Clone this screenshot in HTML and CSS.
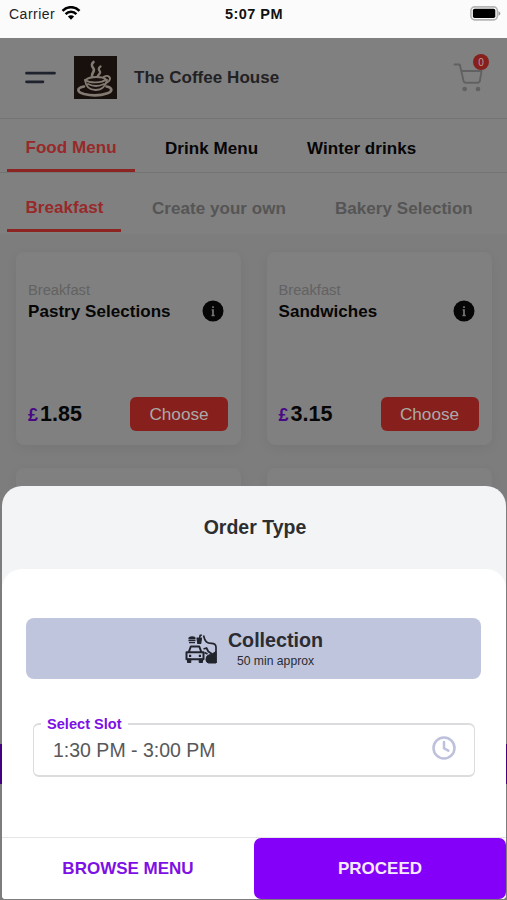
FILE: index.html
```html
<!DOCTYPE html>
<html lang="en">
<head>
<meta charset="utf-8">
<title>The Coffee House</title>
<link rel="stylesheet" href="styles.css">
</head>
<body>
<div class="phone">
  <div class="status">
    <span class="carrier">Carrier
      <svg class="wifi" width="20" height="14" viewBox="0 0 20 14" fill="none" stroke="#000" stroke-width="2.5"><path d="M1.5 4.9C6.2-.1 13.8-.1 18.500 4.900M4.600 8.100c3-3.200 7.800-3.200 10.800 0"/><path d="M10 13.700 6.900 10.500c1.700-1.700 4.500-1.700 6.200 0z" fill="#000" stroke="none"/></svg>
    </span>
    <span class="clock">5:07 PM</span>
    <svg class="battery" width="31" height="15" viewBox="0 0 31 15"><rect x=".9" y=".9" width="26.500" height="13" rx="3.800" fill="#fafafa" stroke="#b5b5b5" stroke-width="1.600"/><rect x="2.900" y="2.700" width="22.400" height="9.400" rx="1.800"/><path d="M28.500 5.200c2.400.8 2.400 3.700 0 4.500z" fill="#999"/></svg>
  </div>
  <header class="bar">
    <svg class="burger" width="31" height="14" viewBox="0 0 31 14" stroke="#1e222d" stroke-width="2.700" stroke-linecap="round"><path d="M1.500 2.200h28M1.500 10.800h16.500"/></svg>
    <svg class="logo" width="43" height="43" viewBox="0 0 43 43" fill="none" stroke="#837a72" stroke-linecap="round">
      <rect width="43" height="43" fill="#17100d" stroke="none"/>
      <path d="M19.500 6c-3 2.500-1.500 4.500 0 6.500 2 3-2.500 4.500-1.500 8" stroke-width="2.600"/><path d="M26.500 10.500c-3 2-1.500 3.500-.5 5s-1.500 3-2.500 5" stroke-width="2.200"/>
      <path d="M11.500 24c3-2.500 7-3 11-3 5 0 8.500 1.200 9.500 2.500-4 3.500-16 4-20.500.5z" stroke-width="1.900"/>
      <path d="M11 24c.7 5.500 4 10 10.500 10s10.500-4.500 11.500-10M14 28c5 2.500 11 2.500 16 0" stroke-width="1.900"/>
      <path d="M29.500 21c5-3 8 1 5.500 4-1 1.200-2 1.600-3 1.700" stroke-width="1.900"/>
      <path d="M10 30.500c-8 1.500-7 5.500 0 7.500 7 1.700 17 1.500 23.500-.8 5.500-2 5-5.700-1-6.700" stroke-width="2.700"/>
    </svg>
    <h1>The Coffee House</h1>
    <div class="cart">
      <svg width="31" height="30" viewBox="0 0 31 30" fill="none" stroke="#616161" stroke-width="1.900" stroke-linecap="round" stroke-linejoin="round"><path d="M1.500 1.500h5.300l3.700 16.300c.3 1.300 1 2 2.400 2h11.500c1.300 0 2.200-.7 2.500-2l1.600-9.800H8.500"/><circle cx="11.700" cy="26" r="1.400" fill="#616161"/><circle cx="25" cy="26" r="1.400" fill="#616161"/></svg>
      <span class="count">0</span>
    </div>
  </header>
  <nav class="tabs main-tabs">
    <a class="tab active">Food Menu</a><a class="tab">Drink Menu</a><a class="tab">Winter drinks</a>
  </nav>
  <nav class="tabs sub-tabs">
    <a class="tab active">Breakfast</a><a class="tab">Create your own</a><a class="tab">Bakery Selection</a>
  </nav>
  <main class="grid">
    <article class="card">
      <div class="kind">Breakfast</div>
      <div class="name"><span>Pastry Selections</span><svg width="22" height="22" viewBox="0 0 22 22"><circle cx="11" cy="11" r="10.500" fill="#060606"/><path d="M11 6.200v1.900M9.700 10H11v5.500M9.500 15.500h3.200" stroke="#777" stroke-width="1.700" fill="none"/></svg></div>
      <div class="buy"><span class="price"><i>£</i>1.85</span><button>Choose</button></div>
    </article>
    <article class="card">
      <div class="kind">Breakfast</div>
      <div class="name"><span>Sandwiches</span><svg width="22" height="22" viewBox="0 0 22 22"><circle cx="11" cy="11" r="10.500" fill="#060606"/><path d="M11 6.200v1.900M9.700 10H11v5.500M9.500 15.500h3.200" stroke="#777" stroke-width="1.700" fill="none"/></svg></div>
      <div class="buy"><span class="price"><i>£</i>3.15</span><button>Choose</button></div>
    </article>
    <article class="card"></article>
    <article class="card"></article>
  </main>
  <div class="basket"></div>
  <section class="sheet">
    <h2>Order Type</h2>
    <div class="panel">
      <div class="method">
        <svg width="32" height="30" viewBox="0 0 32 30" fill="none" stroke="#22242c" stroke-width="2" stroke-linejoin="round">
          <path d="M4 4.500c0-2 6-2 6 0zM3.500 6.500h7M4 8.600h6" stroke-width="1.300"/>
          <path d="M12 4h4.500l-.8 5.500h-2.900zM14.500 4l.5-3h2" fill="#22242c" stroke-width="1.200"/>
          <path d="m3.800 18 2-5.500h8.500l2 5.500M1.500 18.300h17v7h-17z"/><path d="M2.500 25h3.300v3.500H2.500zM14.200 25h3.300v3.500h-3.300z" fill="#22242c" stroke-width="1"/>
          <path d="M4 21.800h2.200M13.800 21.800H16" stroke-width="2.200"/>
          <path d="M18.500 1.500c1.500 6.500 3.500 7.800 8 7.800 3 0 4.500 1 4.500 4V29" stroke-width="1.700"/>
          <path d="m18.500 15 3-1 1.800 3.500L27 20M19.500 18.500l3 1.500" stroke-width="1.800"/>
          <path d="M21.500 23c1-2.500 3.500-2 5.500-3l4-2.500V29h-7.500c-2.500-.5-3-3-2-6z" fill="#22242c" stroke-width="1"/>
        </svg>
        <div class="what"><b>Collection</b><small>50 min approx</small></div>
      </div>
      <fieldset class="slot">
        <legend>Select Slot</legend>
        <span>1:30 PM - 3:00 PM</span>
        <svg width="24" height="24" viewBox="0 0 24 24" fill="none" stroke="#bdc1dc" stroke-width="2.500" stroke-linecap="round"><circle cx="12" cy="12" r="10.500"/><path d="M12 6v6.300l4.300 2.300"/></svg>
      </fieldset>
      <div class="actions"><button class="browse">BROWSE MENU</button><button class="proceed">PROCEED</button></div>
    </div>
  </section>
</div>
</body>
</html>
```

FILE: styles.css
```css
* { box-sizing: border-box; }
body { margin: 0; font-family: "Liberation Sans", Arial, sans-serif; background: #7d7d7d; }
button { font: inherit; border: 0; padding: 0; margin: 0; }
h1, h2 { margin: 0; }
svg { display: block; flex: none; }
.phone { position: relative; width: 507px; height: 900px; overflow: hidden; background: #7d7d7d; }

.status { height: 38px; background: #fbfbfb; display: grid; grid-template-columns: 1fr auto 1fr; padding: 6px 6px 0 9px; line-height: 16px; font-size: 14px; color: #222; }
.carrier { display: flex; gap: 6px; letter-spacing: .5px; }
.clock { font-weight: bold; font-size: 14.500px; letter-spacing: .45px; color: #111; margin-left: -2px; }
.battery { justify-self: end; }

.bar { height: 81px; background: #808080; border-bottom: 1px solid #747474; display: flex; align-items: center; padding: 0 18px 0 25px; }
.burger { margin-top: -1px; }
.logo { margin-left: 18px; margin-right: 17px; margin-top: -1px; }
h1 { font-size: 17px; line-height: 20px; color: #222225; letter-spacing: .05px; }
.cart { position: relative; margin-left: auto; width: 36px; height: 30px; }
.count { position: absolute; left: 20px; top: -9px; width: 16px; height: 16px; border-radius: 50%; background: #87201d; color: #b99; font-size: 10px; line-height: 17px; text-align: center; }

.tabs { display: flex; background: #808080; padding-left: 7px; font-weight: bold; font-size: 17px; line-height: 20px; letter-spacing: .05px; }
.tab { white-space: nowrap; flex: none; }
.tab.active { color: #98292a; border-bottom: 3px solid #8c2422; padding-left: 18.500px; }
.main-tabs { height: 54px; border-bottom: 1px solid #747474; color: #060606; }
.main-tabs .tab { padding-top: 20px; margin-right: 49px; }
.main-tabs .active { width: 128px; margin-right: 30px; padding-top: 19px; }
.sub-tabs { height: 61px; color: #555; }
.sub-tabs .tab { padding-top: 26px; margin-right: 49px; }
.sub-tabs .active { width: 114px; height: 59px; padding-top: 25px; margin-right: 31px; }

.grid { display: grid; grid-template-columns: 225px 225px; gap: 23px 25.500px; padding: 18px 16px; }
.card { height: 193px; background: #808080; border-radius: 8px; padding: 28px 13px 0 12px; box-shadow: 0 3px 12px rgba(0, 0, 0, .06); display: flex; flex-direction: column; }
.kind { font-size: 14.700px; line-height: 20px; color: #626262; }
.name { display: flex; justify-content: space-between; align-items: center; padding-right: 4px; height: 23px; font-weight: bold; font-size: 17px; letter-spacing: .05px; color: #060606; }
.name span { padding-top: 1px; }
.name svg { margin-top: -1px; }
.buy { display: flex; justify-content: space-between; align-items: center; height: 34px; margin-top: 74px; }
.price { font-size: 21.500px; font-weight: bold; color: #060606; }
.price i { font-style: normal; font-size: 18px; color: #480a84; margin-right: 2px; }
.buy button { width: 98px; height: 34px; border-radius: 6px; background: #87201d; color: #aaa; font-size: 17.200px; padding-top: 1px; }
.basket { position: absolute; left: 0; top: 744px; width: 507px; height: 40px; background: #44007f; }

.sheet { position: absolute; left: 2px; top: 486px; width: 504px; height: 413px; background: #f3f4f6; border-radius: 20px 20px 4px 4px; overflow: hidden; }
h2 { height: 83px; padding-top: 30px; padding-left: 2px; text-align: center; font-size: 19.500px; line-height: 22px; color: #2d2e31; }
.panel { height: 330px; background: #fff; border-radius: 20px 20px 0 0; padding-top: 49px; }
.method { margin: 0 25px 0 24px; height: 61px; border-radius: 8px; background: #bfc5dd; display: flex; justify-content: center; gap: 11px; padding: 10px 0 0 1px; color: #2b2c32; }
.method svg { margin-top: 6px; }
.what { display: flex; flex-direction: column; align-items: center; }
.what b { font-size: 19.700px; line-height: 25px; }
.what small { font-size: 12.200px; line-height: 17px; }
.slot { margin: 36px 31px 0 31px; height: 62px; border: 2px solid #dcdcdf; border-left-width: 1px; border-right-width: 1px; border-radius: 6px; padding: 0 18px 0 19px; display: flex; justify-content: space-between; color: #58585b; font-size: 19.500px; line-height: 22px; }
.slot legend { margin-left: -12px; padding: 0 6px; font-size: 14.600px; line-height: 18px; font-weight: bold; color: #7d10e5; }
.slot span { padding-top: 6px; }
.slot svg { margin-top: 3px; }
.actions { margin-top: 60px; height: 62px; border-top: 1px solid #e5e5e7; display: grid; grid-template-columns: 252px 252px; font-size: 17px; font-weight: bold; }
.browse { background: #fff; color: #7d10e5; }
.proceed { background: #8400f8; color: #f5eaff; border-radius: 7px; }
```
